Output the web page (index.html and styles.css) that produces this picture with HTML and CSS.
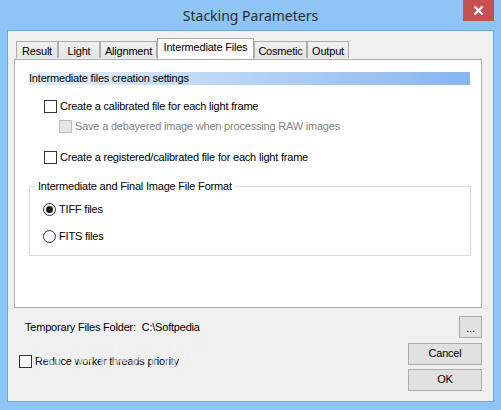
FILE: index.html
```html
<!DOCTYPE html>
<html>
<head>
<meta charset="utf-8">
<link rel="stylesheet" href="styles.css">
</head>
<body>
<div class="window">
  <div class="titlebar">
    <span></span>
    <span class="title">Stacking Parameters</span>
    <div class="close-wrap">
      <div class="close">
        <svg width="11" height="9" viewBox="0 0 11 9"><path d="M1.5 0.5 L9.5 8.5 M9.5 0.5 L1.5 8.5" stroke="#fff" stroke-width="2.2" fill="none"/></svg>
      </div>
    </div>
  </div>
  <div class="client">
    <div class="tabs">
      <div class="tab w-result">Result</div>
      <div class="tab w-light">Light</div>
      <div class="tab w-align">Alignment</div>
      <div class="tab tab-sel w-inter">Intermediate Files</div>
      <div class="tab w-cos">Cosmetic</div>
      <div class="tab w-out">Output</div>
    </div>
    <div class="panel">
      <div class="header">Intermediate files creation settings</div>
      <div class="row r1"><span class="cb"></span><span>Create a calibrated file for each light frame</span></div>
      <div class="row r2 disabled"><span class="cb cb-dis"></span><span>Save a debayered image when processing RAW images</span></div>
      <div class="row r3"><span class="cb"></span><span>Create a registered/calibrated file for each light frame</span></div>
      <div class="group">
        <div class="legend">Intermediate and Final Image File Format</div>
        <div class="row rad1"><span class="radio on"></span><span>TIFF files</span></div>
        <div class="row rad2"><span class="radio"></span><span>FITS files</span></div>
      </div>
    </div>
    <div class="bottom">
      <div class="left-col">
        <div class="folder">Temporary Files Folder:&nbsp; C:\Softpedia</div>
        <div class="row reduce"><span class="cb"></span><span>Reduce worker threads priority</span></div>
      </div>
      <div class="right-col">
        <div class="btn btn-dots">...</div>
        <div class="btn btn-cancel">Cancel</div>
        <div class="btn btn-ok">OK</div>
      </div>
      <div class="watermark">SOFTPEDIA<sup>®</sup></div>
    </div>
  </div>
</div>
</body>
</html>
```

FILE: styles.css
```css
* { box-sizing: border-box; }
html, body { margin: 0; padding: 0; }
body {
  width: 501px;
  height: 410px;
  overflow: hidden;
  font-family: "Liberation Sans", Arial, sans-serif;
  font-size: 11px;
  letter-spacing: -0.2px;
  color: #000;
}
.window {
  width: 501px;
  height: 410px;
  background: #8cc5f6;
  display: flex;
  flex-direction: column;
}
.titlebar {
  height: 31px;
  display: grid;
  grid-template-columns: 1fr auto 1fr;
  align-items: start;
}
.title {
  font-family: "Noto Sans", "Open Sans", sans-serif;
  font-size: 14px;
  letter-spacing: 0;
  color: #2b2b2b;
  line-height: 20px;
  margin-top: 6px;
}
.close-wrap {
  display: flex;
  justify-content: flex-end;
  padding-right: 7px;
}
.close {
  width: 31px;
  height: 21px;
  background: #c75050;
  display: flex;
  align-items: center;
  justify-content: center;
}
.client {
  margin-left: 8px;
  width: 485px;
  height: 370px;
  background: #f0f0f0;
  box-shadow: 0 0 0 1px #6fa8df;
  position: relative;
}
.tabs {
  display: flex;
  align-items: flex-end;
  margin-left: 8px;
  margin-top: 7px;
  height: 20px;
}
.tab {
  height: 17px;
  border: 1px solid #acacac;
  border-bottom: none;
  background: linear-gradient(#f0f0f0, #e5e5e5);
  text-align: center;
  line-height: 16px;
  padding-top: 1px;
  white-space: nowrap;
}
.tab-sel {
  height: 21px;
  background: #fff;
  margin-bottom: -1px;
  position: relative;
  z-index: 2;
  line-height: 16px;
  padding-top: 0;
}
.w-result { width: 42px; }
.w-light { width: 42px; }
.w-align { width: 57px; }
.w-inter { width: 97px; }
.w-cos { width: 53px; }
.w-out { width: 42px; }

.panel {
  margin-left: 6px;
  margin-top: 1px;
  width: 468px;
  height: 249px;
  background: #fff;
  border: 1px solid #acacac;
  position: relative;
  z-index: 1;
}
.header {
  margin-left: 14px;
  margin-top: 12px;
  width: 441px;
  height: 13px;
  line-height: 13px;
  background: linear-gradient(to right, #e6f0fc, #87b5ef);
}
.row {
  display: flex;
  align-items: center;
  height: 13px;
  line-height: 13px;
  white-space: nowrap;
}
.row > span:last-child { margin-left: 3px; }
.r1 { margin-top: 15px; margin-left: 29px; }
.r2 { margin-top: 7px; margin-left: 44px; }
.r3 { margin-top: 18px; margin-left: 29px; }
.disabled { color: #838383; }
.cb {
  width: 13px;
  height: 13px;
  border: 1px solid #333;
  background: #fff;
  flex: none;
}
.cb-dis {
  border-color: #bcbcbc;
  background: #e6e6e6;
}
.group {
  margin-top: 22px;
  margin-left: 14px;
  width: 442px;
  height: 70px;
  border: 1px solid #dcdcdc;
}
.legend {
  margin-top: -7px;
  margin-left: 5px;
  padding: 0 3px;
  background: #fff;
  width: fit-content;
  line-height: 13px;
}
.rad1 { margin-top: 10px; margin-left: 13px; }
.rad2 { margin-top: 14px; margin-left: 13px; }
.radio {
  width: 13px;
  height: 13px;
  border: 1px solid #333;
  border-radius: 50%;
  background: #fff;
  flex: none;
  display: flex;
  align-items: center;
  justify-content: center;
}
.radio.on::after {
  content: "";
  width: 7px;
  height: 7px;
  border-radius: 50%;
  background: #1a1a1a;
}
.bottom {
  display: flex;
  justify-content: space-between;
  padding-right: 11px;
  position: relative;
}
.left-col {
  display: flex;
  flex-direction: column;
}
.folder {
  margin-top: 13px;
  margin-left: 17px;
  line-height: 13px;
  white-space: nowrap;
}
.reduce { margin-top: 21px; margin-left: 11px; }
.right-col {
  display: flex;
  flex-direction: column;
  align-items: flex-end;
  margin-top: 8px;
}
.btn {
  background: #e1e1e1;
  border: 1px solid #adadad;
  text-align: center;
  height: 22px;
  line-height: 19px;
}
.btn-dots { width: 23px; height: 22px; line-height: 22px; }
.btn-cancel { width: 74px; margin-top: 5px; }
.btn-ok { width: 74px; margin-top: 4px; }
.watermark {
  position: absolute;
  left: 27px;
  top: 30px;
  font-family: "Liberation Sans", Arial, sans-serif;
  font-weight: bold;
  font-size: 38px;
  letter-spacing: -1px;
  transform: scaleX(0.78);
  transform-origin: left top;
  color: rgba(255, 255, 255, 0.55);
  text-shadow: 0 0 1px rgba(0, 0, 0, 0.06);
  pointer-events: none;
}
.watermark sup {
  font-size: 12px;
  font-weight: normal;
  vertical-align: top;
}
```
